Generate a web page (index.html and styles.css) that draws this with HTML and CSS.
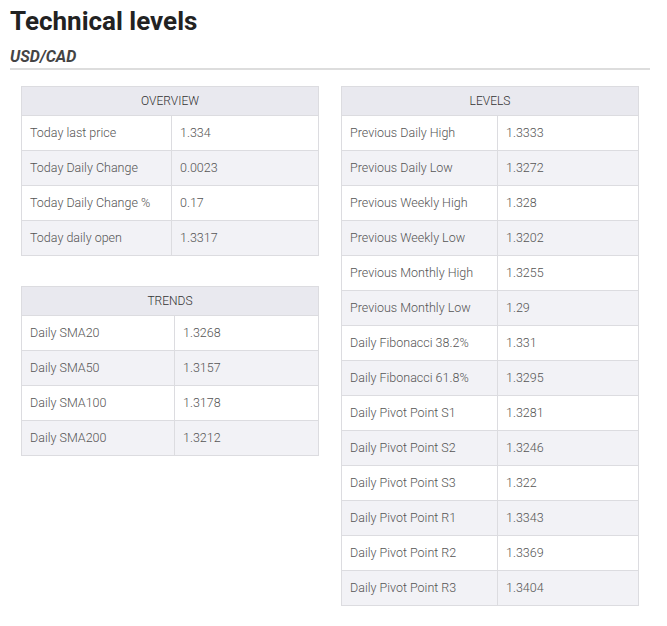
FILE: index.html
```html
<!DOCTYPE html>
<html>
<head>
<meta charset="utf-8">
<link rel="stylesheet" href="styles.css">
</head>
<body>
<div class="page">
  <h1 class="title">Technical levels</h1>
  <h2 class="subtitle">USD/CAD</h2>
  <div class="columns">
    <div class="col">
      <table class="tbl overview">
        <thead><tr><th colspan="2">OVERVIEW</th></tr></thead>
        <tbody>
          <tr><td class="k">Today last price</td><td>1.334</td></tr>
          <tr><td class="k">Today Daily Change</td><td>0.0023</td></tr>
          <tr><td class="k">Today Daily Change %</td><td>0.17</td></tr>
          <tr><td class="k">Today daily open</td><td>1.3317</td></tr>
        </tbody>
      </table>
      <table class="tbl trends">
        <thead><tr><th colspan="2">TRENDS</th></tr></thead>
        <tbody>
          <tr><td class="k">Daily SMA20</td><td>1.3268</td></tr>
          <tr><td class="k">Daily SMA50</td><td>1.3157</td></tr>
          <tr><td class="k">Daily SMA100</td><td>1.3178</td></tr>
          <tr><td class="k">Daily SMA200</td><td>1.3212</td></tr>
        </tbody>
      </table>
    </div>
    <div class="col">
      <table class="tbl levels">
        <thead><tr><th colspan="2">LEVELS</th></tr></thead>
        <tbody>
          <tr><td class="k">Previous Daily High</td><td>1.3333</td></tr>
          <tr><td class="k">Previous Daily Low</td><td>1.3272</td></tr>
          <tr><td class="k">Previous Weekly High</td><td>1.328</td></tr>
          <tr><td class="k">Previous Weekly Low</td><td>1.3202</td></tr>
          <tr><td class="k">Previous Monthly High</td><td>1.3255</td></tr>
          <tr><td class="k">Previous Monthly Low</td><td>1.29</td></tr>
          <tr><td class="k">Daily Fibonacci 38.2%</td><td>1.331</td></tr>
          <tr><td class="k">Daily Fibonacci 61.8%</td><td>1.3295</td></tr>
          <tr><td class="k">Daily Pivot Point S1</td><td>1.3281</td></tr>
          <tr><td class="k">Daily Pivot Point S2</td><td>1.3246</td></tr>
          <tr><td class="k">Daily Pivot Point S3</td><td>1.322</td></tr>
          <tr><td class="k">Daily Pivot Point R1</td><td>1.3343</td></tr>
          <tr><td class="k">Daily Pivot Point R2</td><td>1.3369</td></tr>
          <tr><td class="k">Daily Pivot Point R3</td><td>1.3404</td></tr>
        </tbody>
      </table>
    </div>
  </div>
</div>
</body>
</html>
```

FILE: styles.css
```css
html, body {
  margin: 0;
  padding: 0;
  background: #ffffff;
}
.page {
  font-family: Roboto, "Noto Sans", sans-serif;
  color: #333;
  padding: 6px 17px 0 10px;
}
.title {
  margin: 0;
  font-size: 26px;
  line-height: 30px;
  font-weight: 700;
  color: #222;
}
.subtitle {
  margin: 12px 0 0 0;
  font-size: 16px;
  line-height: 18px;
  font-weight: 700;
  font-style: italic;
  color: #444;
  border-bottom: 2px solid #ddd;
  height: 20px;
}
.columns {
  display: flex;
  gap: 22px;
  padding-left: 11px;
  margin-top: 16px;
}
.col {
  width: 298px;
  display: flex;
  flex-direction: column;
  gap: 30px;
}
.tbl {
  width: 298px;
  border-collapse: collapse;
  font-size: 12.5px;
  font-weight: 300;
  color: #555;
}
.tbl th {
  background: #e9e9ef;
  border: 1px solid #dcdce0;
  height: 27px;
  padding: 0 0 1px 0;
  font-weight: 300;
  font-size: 12px;
  color: #333;
  text-align: center;
}
.tbl td {
  border: 1px solid #dcdce0;
  height: 32px;
  padding: 0 0 2px 8px;
  text-align: left;
}
.tbl tbody tr:nth-child(even) td {
  background: #f2f2f6;
}
.overview .k { width: 141px; }
.trends .k { width: 144px; }
.levels .k { width: 147px; }
```
